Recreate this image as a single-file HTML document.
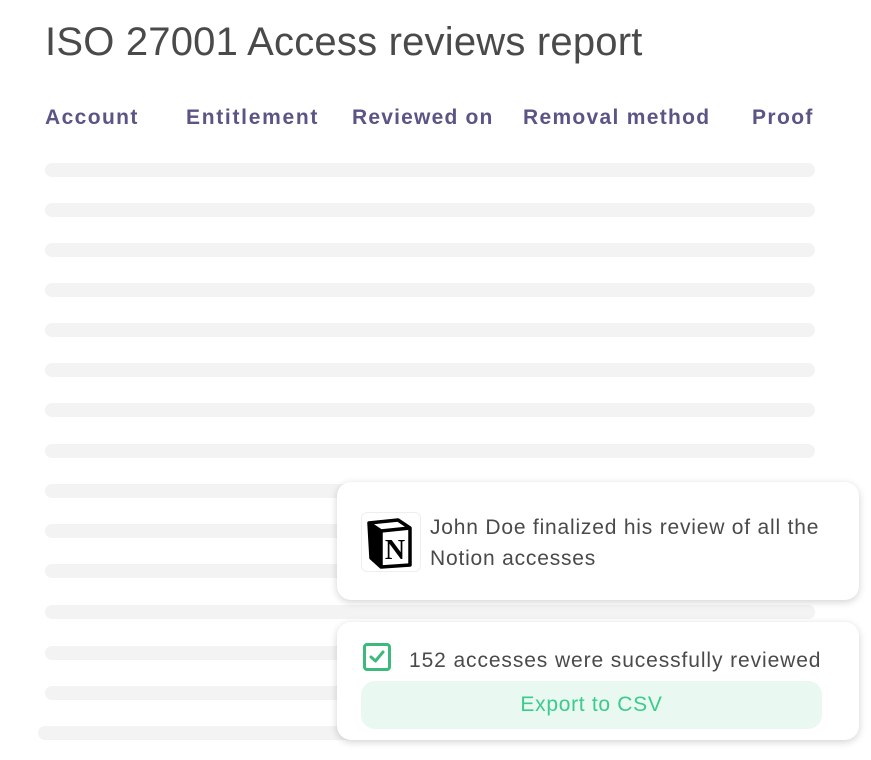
<!DOCTYPE html>
<html><head><meta charset="utf-8"><style>
body{margin:0;width:871px;height:760px;background:#fff;position:relative;overflow:hidden;font-family:"Liberation Sans",sans-serif}
.t{position:absolute;left:45px;top:20px;font-size:40px;color:#4a4a4a;letter-spacing:0.2px;white-space:nowrap}
.h{position:absolute;top:106px;font-size:21px;font-weight:bold;color:#5a5585;white-space:nowrap;letter-spacing:1.4px}
.b{position:absolute;left:45px;width:770px;height:14px;border-radius:7px;background:#f3f3f3}
.c{position:absolute;left:337px;width:522px;height:118px;background:#fff;border-radius:14px;box-shadow:0 2px 8px rgba(0,0,0,.18)}
</style></head><body>
<div class="t">ISO 27001 Access reviews report</div>
<div class="h" style="left:45px">Account</div>
<div class="h" style="left:186px;letter-spacing:1.7px">Entitlement</div>
<div class="h" style="left:352px;letter-spacing:1.2px">Reviewed on</div>
<div class="h" style="left:523px;letter-spacing:1.3px">Removal method</div>
<div class="h" style="left:752px">Proof</div>
<div class="b" style="top:163px"></div><div class="b" style="top:203px"></div><div class="b" style="top:243px"></div><div class="b" style="top:283px"></div><div class="b" style="top:323px"></div><div class="b" style="top:363px"></div><div class="b" style="top:403px"></div><div class="b" style="top:444px"></div><div class="b" style="top:484px"></div><div class="b" style="top:524px"></div><div class="b" style="top:564px"></div><div class="b" style="top:605px"></div><div class="b" style="top:646px"></div><div class="b" style="top:686px"></div><div class="b" style="top:726px;left:38px"></div>
<div class="c" style="top:482px">
 <div style="position:absolute;left:24px;top:30px;width:58px;height:58px;border:1px solid #eee;border-radius:6px;background:#fff">
  <svg width="58" height="58" viewBox="0 0 58 58"><path d="M7 10 L36 7 L48 15 L48 52 L19 54 L9 45 Z" fill="#fff" stroke="#000" stroke-width="3.5" stroke-linejoin="round"/><path d="M7 10 L19 18 L48 15 M19 18 L19 54" fill="none" stroke="#000" stroke-width="3.5"/><path d="M7 10 L19 18 L19 54 L9 45 Z" fill="#000"/><text x="33" y="46" font-family="Liberation Serif,serif" font-weight="bold" font-size="28" text-anchor="middle">N</text></svg>
 </div>
 <div style="position:absolute;left:93px;top:30px;font-size:21px;line-height:31px;color:#4a4a4a;letter-spacing:0.8px;white-space:nowrap">John Doe finalized his review of all the<br>Notion accesses</div>
</div>
<div class="c" style="top:622px">
 <div style="position:absolute;left:26px;top:21px;width:28px;height:28px;border:3px solid #3dba7b;border-radius:4px;box-sizing:border-box"><svg width="22" height="22" viewBox="0 0 22 22"><path d="M5 11 L9.5 15 L17 6" fill="none" stroke="#3dba7b" stroke-width="3" stroke-linecap="round" stroke-linejoin="round"/></svg></div>
 <div style="position:absolute;left:72px;top:27px;font-size:21px;color:#4a4a4a;white-space:nowrap;letter-spacing:0.9px">152 accesses were sucessfully reviewed</div>
 <div style="position:absolute;left:24px;top:59px;width:461px;height:48px;border-radius:14px;background:#e9f8f1;color:#3ccb8d;font-size:21px;line-height:48px;text-align:center;letter-spacing:0.7px">Export to CSV</div>
</div>
</body></html>
